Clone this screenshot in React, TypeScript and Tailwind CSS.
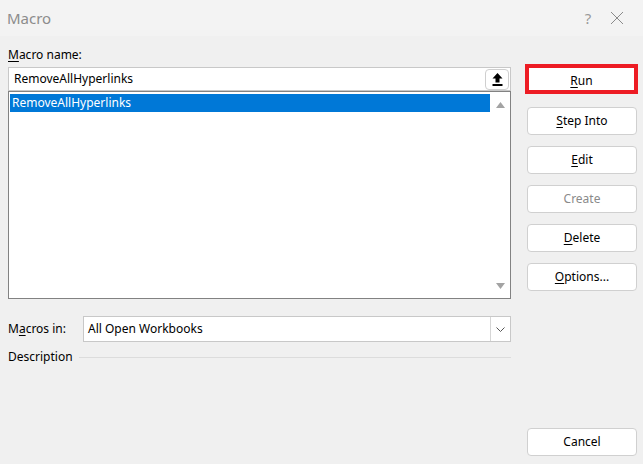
import React from 'react';

const font = { fontFamily: '"Segoe UI", "Noto Sans", sans-serif' };

const Btn: React.FC<{ label: string; u?: number; disabled?: boolean }> = ({ label, u, disabled }) => (
  <button
    className={`w-[110px] h-[28px] rounded-[4px] border border-[#d0d0d0] bg-white text-[12px] ${disabled ? 'text-[#8a8a8a]' : 'text-black'}`}
  >
    {u === undefined ? label : (
      <>
        {label.slice(0, u)}
        <span className="underline underline-offset-2">{label[u]}</span>
        {label.slice(u + 1)}
      </>
    )}
  </button>
);

export default function App() {
  return (
    <div className="w-[643px] h-[464px] bg-[#f0f0f0] flex flex-col text-black overflow-hidden" style={font}>
      {/* title bar */}
      <div className="h-[36px] bg-[#f3f3f3] flex items-center justify-between pl-[7px]">
        <span className="text-[15px] text-[#8c8c8c]">Macro</span>
        <div className="flex items-center h-full pr-[19px]">
          <span className="w-[20px] text-center text-[15px] text-[#9a9a9a] mr-[12px]">?</span>
          <span className="w-[14px] flex justify-center">
            <svg width="14" height="14" viewBox="0 0 14 14" stroke="#8a8a8a" strokeWidth="1">
              <path d="M1 1L13 13M13 1L1 13" />
            </svg>
          </span>
        </div>
      </div>

      <div className="flex flex-1 pl-[8px] pr-[6px]">
        {/* left column */}
        <div className="w-[503px] flex flex-col">
          <div className="mt-[10px] text-[12px] h-[18px] leading-[18px]">
            <span className="underline underline-offset-2">M</span>acro name:
          </div>
          <div className="mt-[3px] h-[24px] bg-white border border-[#c8c8c8] flex items-center justify-between pl-[5px] pr-[1px]">
            <span className="text-[12px]">RemoveAllHyperlinks</span>
            <div className="w-[24px] h-[21px] border border-[#cfcfcf] rounded-[4px] bg-white flex items-center justify-center">
              <svg width="11" height="13" viewBox="0 0 11 13" fill="#000">
                <path d="M5.5 0L10.5 5.5H7.5V9.5H3.5V5.5H0.5Z" />
                <rect x="0.5" y="11" width="10" height="2" />
              </svg>
            </div>
          </div>
          <div className="h-[208px] bg-white border border-[#828282] flex pl-[1px] pt-[2px] pb-[1px]">
            <div className="flex-1">
              <div className="h-[18px] bg-[#0078d7] text-white text-[12px] leading-[18px] pl-[2px]">RemoveAllHyperlinks</div>
            </div>
            <div className="w-[20px] flex flex-col justify-between items-center py-[8px]">
              <svg width="9" height="6" viewBox="0 0 9 6" fill="#a3a3a3"><path d="M4.5 0L9 6H0Z" /></svg>
              <svg width="9" height="6" viewBox="0 0 9 6" fill="#a3a3a3"><path d="M0 0H9L4.5 6Z" /></svg>
            </div>
          </div>

          <div className="mt-[17px] flex items-center h-[26px]">
            <span className="w-[75px] text-[12px]">M<span className="underline underline-offset-2">a</span>cros in:</span>
            <div className="flex-1 h-[26px] bg-white border border-[#c8c8c8] flex items-center">
              <span className="flex-1 pl-[4px] text-[12px]">All Open Workbooks</span>
              <div className="w-[20px] h-full border-l border-[#d6d6d6] flex items-center justify-center">
                <svg width="9" height="5" viewBox="0 0 9 5" fill="none" stroke="#555" strokeWidth="1"><path d="M0.5 0.5L4.5 4.5L8.5 0.5" /></svg>
              </div>
            </div>
          </div>

          <div className="mt-[5px] flex items-center h-[20px]">
            <span className="text-[12px] pr-[6px]">Description</span>
            <div className="flex-1 h-px bg-[#dcdcdc]" />
          </div>
        </div>

        {/* right column */}
        <div className="flex-1 flex flex-col items-end pt-[28px]">
          <div className="w-[113px] h-[30px] border-[4px] border-[#ed1c24] bg-white flex items-center justify-center text-[12px] mr-[-1px] pt-[3px]">
            <span><span className="underline underline-offset-2">R</span>un</span>
          </div>
          <div className="flex flex-col gap-[11px] mt-[13px]">
            <Btn label="Step Into" u={0} />
            <Btn label="Edit" u={0} />
            <Btn label="Create" disabled />
            <Btn label="Delete" u={0} />
            <Btn label="Options..." u={0} />
          </div>
          <div className="mt-auto mb-[8px]">
            <Btn label="Cancel" />
          </div>
        </div>
      </div>
    </div>
  );
}
